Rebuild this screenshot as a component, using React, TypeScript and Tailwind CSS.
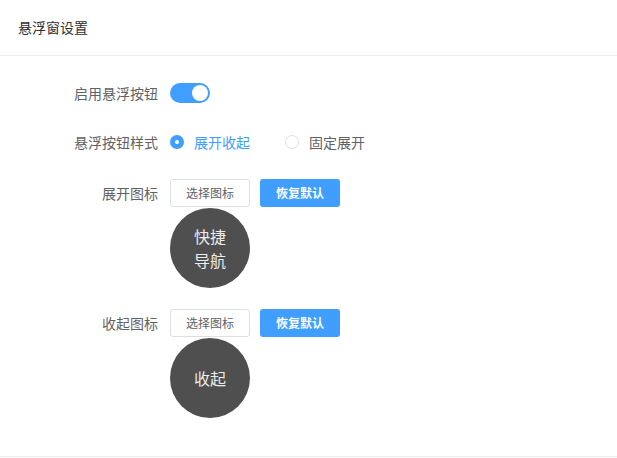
import React from "react";

const font = { fontFamily: '"Noto Sans CJK SC", "Noto Sans", sans-serif' };

function Label({ children }: { children: React.ReactNode }) {
  return (
    <div className="w-[158px] shrink-0 text-right text-[14px] text-[#606266] leading-[28px]">
      {children}
    </div>
  );
}

function Circle({ lines }: { lines: string[] }) {
  return (
    <div className="mt-[1px] w-[80px] h-[80px] rounded-full bg-[#4f4f4f] flex flex-col items-center justify-center text-[16px] leading-[24px] text-[#ececec]">
      {lines.map((l) => (
        <div key={l}>{l}</div>
      ))}
    </div>
  );
}

function Buttons() {
  return (
    <div className="flex gap-[10px]">
      <div className="w-[80px] h-[28px] border border-[#dcdfe6] rounded-[3px] flex items-center justify-center text-[12px] text-[#606266] bg-white">
        选择图标
      </div>
      <div className="w-[80px] h-[28px] rounded-[3px] bg-[#409eff] flex items-center justify-center text-[12px] font-bold text-white">
        恢复默认
      </div>
    </div>
  );
}

export default function App() {
  return (
    <div className="w-[617px] h-[458px] bg-white flex flex-col" style={font}>
      <div className="h-[56px] shrink-0 border-b border-[#eeeeee] flex items-center pl-[18px] text-[14px] text-[#303133]">
        悬浮窗设置
      </div>
      <div className="h-[401px] shrink-0 border-b border-[#eeeeee] pt-[17px]">
        <div className="flex items-center h-[40px]">
          <Label>启用悬浮按钮</Label>
          <div className="ml-[12px] w-[40px] h-[20px] rounded-full bg-[#409eff] flex items-center justify-end pr-[2px]">
            <div className="w-[16px] h-[16px] rounded-full bg-white" />
          </div>
        </div>
        <div className="flex items-center h-[40px] mt-[9px]">
          <Label>悬浮按钮样式</Label>
          <div className="ml-[12px] flex items-center">
            <div className="w-[14px] h-[14px] rounded-full bg-[#409eff] flex items-center justify-center">
              <div className="w-[4px] h-[4px] rounded-full bg-white" />
            </div>
            <span className="ml-[10px] text-[14px] text-[#409eff]">展开收起</span>
            <div className="ml-[35px] w-[14px] h-[14px] rounded-full border border-[#dcdfe6] bg-white" />
            <span className="ml-[10px] text-[14px] text-[#606266]">固定展开</span>
          </div>
        </div>
        <div className="flex items-start mt-[17px]">
          <Label>展开图标</Label>
          <div className="ml-[12px] flex flex-col">
            <Buttons />
            <Circle lines={["快捷", "导航"]} />
          </div>
        </div>
        <div className="flex items-start mt-[21px]">
          <Label>收起图标</Label>
          <div className="ml-[12px] flex flex-col">
            <Buttons />
            <Circle lines={["收起"]} />
          </div>
        </div>
      </div>
    </div>
  );
}
